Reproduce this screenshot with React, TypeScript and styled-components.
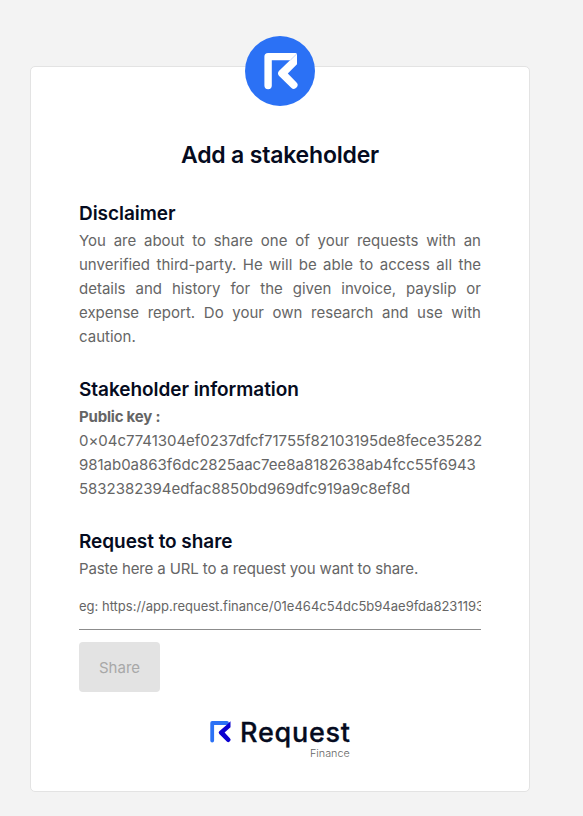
import React from 'react';
import styled, { createGlobalStyle } from 'styled-components';

const GlobalStyle = createGlobalStyle`
  * { box-sizing: border-box; }
  body {
    margin: 0;
    background: #f3f3f3;
    font-family: Inter, "Liberation Sans", sans-serif;
    font-size: 15px;
    line-height: 24px;
    color: #656565;
  }
`;

const Page = styled.main`
  display: flex;
  height: 816px;
  padding: 66px 53px 24px 30px;
  overflow: hidden;
`;

const Card = styled.section`
  display: flex;
  flex-direction: column;
  width: 500px;
  height: 726px;
  padding: 0 48px;
  background: #fff;
  border: 1px solid #e3e3e3;
  border-radius: 5px;
`;

const Badge = styled.svg`
  align-self: center;
  flex: none;
  width: 70px;
  height: 70px;
  margin-top: -31px;
`;

const Title = styled.h1`
  margin: 32px 0 0;
  height: 34px;
  font-size: 23px;
  font-weight: 600;
  line-height: 34px;
  letter-spacing: -0.19px;
  text-align: center;
  color: #050b20;
`;

const Block = styled.section<{ $gap: number }>`
  margin-top: ${({ $gap }) => $gap}px;
`;

const Heading = styled.h2`
  margin: 0 0 1px;
  font-size: 19px;
  font-weight: 600;
  line-height: 28px;
  letter-spacing: -0.05px;
  color: #050b20;
`;

const Text = styled.p<{ $justify?: boolean; $tracking?: number }>`
  margin: 0;
  text-align: ${({ $justify }) => ($justify ? 'justify' : 'left')};
  letter-spacing: ${({ $tracking = 0 }) => $tracking}px;
`;

const Label = styled.strong`
  display: block;
  font-weight: 700;
  letter-spacing: -0.2px;
`;

const KeyLine = styled.span`
  display: block;
  white-space: nowrap;
  letter-spacing: -0.03px;
`;

const UrlInput = styled.input`
  display: block;
  width: 100%;
  height: 47px;
  margin-top: 2px;
  padding: 0;
  border: 0;
  border-bottom: 1px solid #8c8c8c;
  border-radius: 0;
  outline: 0;
  background: transparent;
  font: 400 13px Inter, "Liberation Sans", sans-serif;
  &::placeholder { color: #656565; opacity: 1; }
`;

const ShareButton = styled.button`
  width: 81px;
  height: 50px;
  margin-top: 12px;
  padding: 0;
  border: 0;
  border-radius: 4px;
  background: #e3e3e3;
  color: #a8a8a8;
  font: 400 15px Inter, "Liberation Sans", sans-serif;
`;

const Footer = styled.footer`
  display: flex;
  align-self: center;
  gap: 8px;
  width: 142px;
  margin-top: 25px;
`;

const LogoMark = styled.svg`
  flex: none;
  width: 22px;
  height: 24px;
  margin: 3px 0 0 1px;
`;

const Wordmark = styled.div`
  display: flex;
  flex-direction: column;
  align-items: flex-end;
`;

const Brand = styled.span`
  font-size: 27px;
  font-weight: 500;
  line-height: 32px;
  letter-spacing: 0.75px;
  margin-right: -1px;
  color: #050b20;
  -webkit-text-stroke: 0.3px #050b20;
`;

const Division = styled.span`
  font-size: 10.8px;
  font-weight: 300;
  line-height: 12px;
  margin-top: -1px;
  color: #656565;
`;

const publicKey = [
  '0×04c7741304ef0237dfcf71755f82103195de8fece35282',
  '981ab0a863f6dc2825aac7ee8a8182638ab4fcc55f6943',
  '5832382394edfac8850bd969dfc919a9c8ef8d',
];

export default function App() {
  return (
    <>
      <GlobalStyle />
      <Page>
        <Card>
          <Badge viewBox="0 0 70 70" aria-hidden="true">
            <circle cx="35" cy="35" r="35" fill="#2b71f5" />
            <path
              d="M23.1 49.5V20.6H46"
              fill="none"
              stroke="#fff"
              strokeWidth="7.4"
              strokeLinecap="round"
              strokeLinejoin="round"
            />
            <path
              d="M45 17H50.5Q52 17 52 18.5V28.3L42.8 37.4L51.3 46.2A3.6 3.6 0 0 1 46.2 51.7L33.9 39.7Q32 37.4 33.9 35.1L45 24.3Z"
              fill="#fff"
            />
            <path d="M45.3 24.2L52 17.6" stroke="#9abdf9" strokeWidth="0.6" />
          </Badge>
          <Title>Add a stakeholder</Title>
          <Block $gap={28}>
            <Heading>Disclaimer</Heading>
            <Text $justify>
              You are about to share one of your requests with an unverified
              third-party. He will be able to access all the details and history
              for the given invoice, payslip or expense report. Do your own
              research and use with caution.
            </Text>
          </Block>
          <Block $gap={27}>
            <Heading>Stakeholder information</Heading>
            <Text>
              <Label>Public key :</Label>
              {publicKey.map((line) => (
                <KeyLine key={line}>{line}</KeyLine>
              ))}
            </Text>
          </Block>
          <Block $gap={27}>
            <Heading>Request to share</Heading>
            <Text $tracking={-0.12}>Paste here a URL to a request you want to share.</Text>
            <UrlInput placeholder="eg: https://app.request.finance/01e464c54dc5b94ae9fda82311934" />
            <ShareButton disabled>Share</ShareButton>
          </Block>
          <Footer>
            <LogoMark viewBox="0 0 22 24" aria-hidden="true">
              <path
                d="M2.2 20.5V3H17"
                fill="none"
                stroke="#2b71f5"
                strokeWidth="3.8"
                strokeLinecap="round"
                strokeLinejoin="round"
              />
              <path
                d="M16.5 5L20.5 1.2V7.2L14.6 12.6L19.9 18.2A2.1 2.1 0 0 1 16.8 21.4L9.3 14Q8 12.6 9.3 11.3Z"
                fill="#0b00d0"
              />
            </LogoMark>
            <Wordmark>
              <Brand>Request</Brand>
              <Division>Finance</Division>
            </Wordmark>
          </Footer>
        </Card>
      </Page>
    </>
  );
}
